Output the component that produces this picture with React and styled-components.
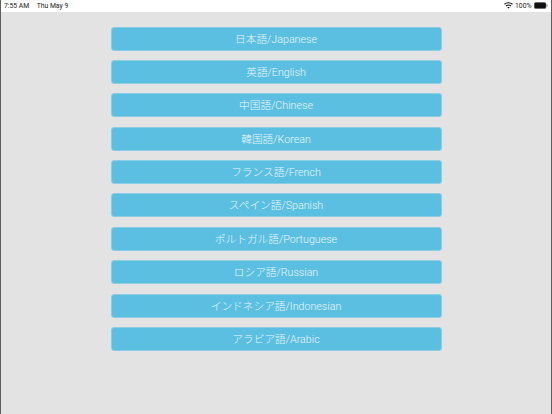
import React from "react";
import styled, { createGlobalStyle } from "styled-components";

const Global = createGlobalStyle`
  html, body { margin: 0; padding: 0; }
  body { font-family: "Roboto", "Noto Sans CJK JP", sans-serif; }
`;

const Screen = styled.div`
  width: 552px;
  height: 414px;
  box-sizing: border-box;
  display: flex;
  flex-direction: column;
  background: #e3e3e3;
  border-left: 1px solid #5f5f5f;
  border-right: 1px solid #5f5f5f;
  overflow: hidden;
`;

const StatusBar = styled.div`
  height: 11px;
  flex: none;
  background: #fff;
  display: flex;
  align-items: center;
  justify-content: space-between;
  padding: 0 3px 1px 3px;
  font-size: 6.8px;
  color: #222;
`;

const StatusGroup = styled.div`
  display: flex;
  align-items: center;
  gap: ${(p) => p.$gap}px;
`;

const List = styled.div`
  display: flex;
  flex-direction: column;
  align-items: center;
  gap: 9.4px;
  padding-top: 14.5px;
`;

const LangButton = styled.button`
  box-sizing: border-box;
  width: 331px;
  height: 24px;
  flex: none;
  border: 1px solid #8ccde3;
  border-radius: 3px;
  padding: 0 0 1px;
  background: #5abfe0;
  color: #eaf7fb;
  font-family: "Roboto", "Noto Sans CJK JP", sans-serif;
  font-weight: 300;
  font-size: 10.7px;
`;

const languages = [
  "日本語/Japanese",
  "英語/English",
  "中国語/Chinese",
  "韓国語/Korean",
  "フランス語/French",
  "スペイン語/Spanish",
  "ポルトガル語/Portuguese",
  "ロシア語/Russian",
  "インドネシア語/Indonesian",
  "アラビア語/Arabic",
];

const Wifi = () => (
  <svg width="9" height="7" viewBox="0 0 18 14" fill="none" stroke="#111" strokeWidth="2.2">
    <path d="M1 4.5C5.5 0.5 12.5 0.5 17 4.5" />
    <path d="M4 8C7 5.5 11 5.5 14 8" />
    <path d="M9 13L6.6 10.6C8 9.6 10 9.6 11.4 10.6Z" fill="#111" stroke="none" />
  </svg>
);

const Battery = () => (
  <svg width="14" height="7" viewBox="0 0 28 14">
    <rect x="0.5" y="1" width="23.5" height="12" rx="3" fill="#111" stroke="#555" />
    <rect x="25" y="5" width="2" height="4" rx="1" fill="#777" />
  </svg>
);

export default function App() {
  return (
    <Screen>
      <Global />
      <StatusBar>
        <StatusGroup $gap={7.5}>
          <span>7:55 AM</span>
          <span>Thu May 9</span>
        </StatusGroup>
        <StatusGroup $gap={2.5}>
          <Wifi />
          <span>100%</span>
          <Battery />
        </StatusGroup>
      </StatusBar>
      <List>
        {languages.map((l) => (
          <LangButton key={l}>{l}</LangButton>
        ))}
      </List>
    </Screen>
  );
}
